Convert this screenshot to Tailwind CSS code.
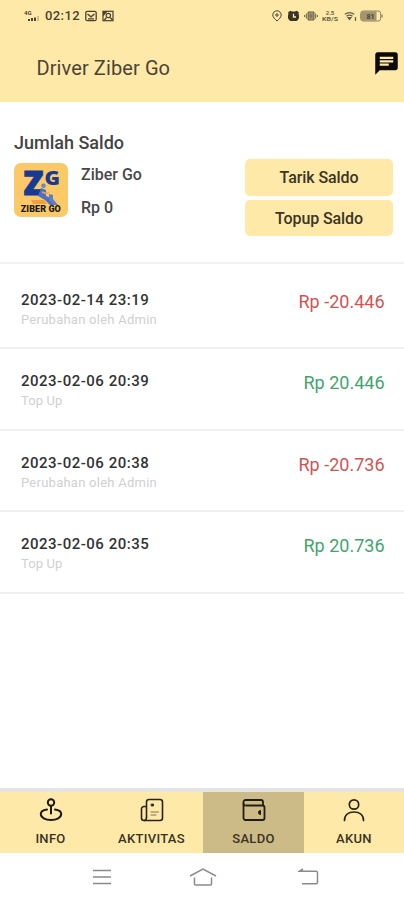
<!DOCTYPE html>
<html lang="id">
<head>
    <meta charset="UTF-8">
    <meta name="viewport" content="width=device-width, initial-scale=1.0">
    <title>Driver Ziber Go</title>
    <script src="https://cdn.jsdelivr.net/npm/@tailwindcss/browser@4"></script>
</head>
<body class="bg-white font-[Roboto,sans-serif] text-[#333]">
    <div class="flex flex-col w-[404px] h-[900px] overflow-hidden">
        <header class="h-[102px] shrink-0 bg-[#ffe9a9]">
            <!-- Status bar -->
            <div class="flex items-center h-8 pl-6 pr-[21px] text-[#4a4231]">
                <svg class="w-4 h-3 overflow-visible" viewBox="0 0 16 12" fill="currentColor">
                    <text x="0" y="5" font-size="6" font-weight="700">4G</text>
                    <path d="M4 9h2v2H4zM7 8h2v3H7zM10 7.500h2V11h-2z"/>
                    <path d="M13 6h2v5h-2z" opacity=".25"/>
                </svg>
                <span class="ml-[5px] text-[13px] font-medium tracking-[0.4px] leading-4">02:12</span>
                <svg class="ml-[5px] w-3 h-3" viewBox="0 0 12 12" fill="none" stroke="currentColor" stroke-width="1.3">
                    <rect x=".8" y="1.300" width="10.400" height="9.400" rx="1.500"/>
                    <path d="M2.500 4 6 6.800 9.500 4M3 8.800h6"/>
                </svg>
                <svg class="ml-[5px] w-3 h-3" viewBox="0 0 12 12" fill="none" stroke="currentColor" stroke-width="1.2">
                    <rect x="1" y="1.300" width="10" height="9.400"/>
                    <path d="M1.500 1.800h3L1.500 5z" fill="currentColor"/>
                    <circle cx="6.300" cy="5.500" r="2.200"/>
                    <path d="m2 10.500 2.500-3M10.500 10 8 7.500"/>
                </svg>
                <svg class="ml-auto w-[10px] h-3" viewBox="0 0 10 12" fill="none" stroke="currentColor">
                    <path d="M5 11C3 9 .8 7.500.8 5a4.200 4.200 0 0 1 8.400 0c0 2.500-2.200 4-4.200 6z"/>
                    <circle cx="5" cy="5" r="1.200"/>
                </svg>
                <svg class="ml-[6px] w-[11px] h-3" viewBox="0 0 11 12">
                    <path d="M.3 2 2.500.8l1.500.7h3L8.500.8 10.700 2v2.500A5 5 0 0 1 8.500 11h-6A5 5 0 0 1 .3 4.500z" fill="#3a3427"/>
                    <path d="M5.500 3.800V7H8" fill="none" stroke="#ffe9a9" stroke-width="1.300"/>
                </svg>
                <svg class="ml-[5px] w-[14px] h-3" viewBox="0 0 14 12" fill="none" stroke="#6b6148">
                    <path d="M4 2h6v8H4zM2.300 3.500v5M11.700 3.500v5M.6 5v2M13.400 5v2" fill="#a3966e"/>
                    <path d="M5.500 5h3M5.500 7h3"/>
                </svg>
                <svg class="ml-[3px] w-[18px] h-3 overflow-visible" viewBox="0 0 18 12" fill="#6b6148">
                    <text x="9" y="4.800" font-size="6" font-weight="700" text-anchor="middle">2.5</text>
                    <text x="1" y="11.200" font-size="5.500" font-weight="700" textLength="16" lengthAdjust="spacingAndGlyphs">KB/S</text>
                </svg>
                <svg class="ml-[5px] w-[13px] h-3" viewBox="0 0 13 12" fill="none" stroke="#6b6148" stroke-width="1.300">
                    <path d="M.8 4.300c2.800-2 6.600-2 9.400 0M2.500 6.200c1.800-1.300 4.200-1.300 6 0"/>
                    <path d="M2.800 7h5.400L5.500 10.500z" fill="#6b6148" stroke="none"/>
                    <path d="M11.500 7v4"/>
                </svg>
                <svg class="ml-[3px] w-[23px] h-3" viewBox="0 0 23 12">
                    <rect x=".7" y="1" width="20" height="10" rx="2.500" fill="#ffe9a9" stroke="#8d8261"/>
                    <path d="M3 1.300h13.500v9.400H3A2 2 0 0 1 1 9V3a2 2 0 0 1 2-1.700z" fill="#a3966e"/>
                    <text x="10.500" y="8.600" font-size="7" font-weight="700" text-anchor="middle" fill="#4a4231">81</text>
                    <path d="M22 4.500v3" stroke="#8d8261" stroke-width="1.300"/>
                </svg>
            </div>
            <!-- Title -->
            <div class="flex items-center justify-between h-[62px] pl-[36.500px] pr-[4px] pt-[10px]">
                <h1 class="text-[20px] leading-6 tracking-[0.1px] text-[#4b4436]">Driver Ziber Go</h1>
                <svg class="w-[27px] h-[27px] -mt-[9px]" viewBox="0 0 24 24" fill="#0c0a05">
                    <path d="M20 2H4c-1.100 0-1.990.9-1.990 2L2 22l4-4h14c1.100 0 2-.9 2-2V4c0-1.100-.9-2-2-2zM6 9h12v2H6V9zm8 5H6v-2h8v2zm4-6H6V6h12v2z"/>
                </svg>
            </div>
        </header>

        <!-- Balance -->
        <section class="h-[162px] shrink-0 border-b-2 border-[#f2f2f2] pl-[14px] pr-[11px] pt-[30px]">
            <h2 class="text-[18px] leading-[22px] font-medium text-[#444]">Jumlah Saldo</h2>
            <div class="flex mt-[5px]">
                <svg class="mt-[4px] w-[54px] h-[54px] shrink-0 overflow-visible" viewBox="0 0 54 54">
                    <rect width="54" height="54" rx="7" fill="#fbc967"/>
                    <g fill="#173a94" font-family="Open Sans, sans-serif" font-weight="800">
                        <text x="9.500" y="32" font-size="33" textLength="20" lengthAdjust="spacingAndGlyphs" stroke="#173a94">Z</text>
                        <text x="30.500" y="22" font-size="20" textLength="15.500" lengthAdjust="spacingAndGlyphs">G</text>
                    </g>
                    <path d="M17 37h13l3 4H19z" fill="#f0a040"/>
                    <path d="m27 25 5 2v6l5 2 5 7h-6l-5-5-7-4z" fill="#4c6fc4"/>
                    <path d="m35 31 4 1v4l5 6h-4l-5-5z" fill="#5f7fca"/>
                    <circle cx="29.500" cy="22.800" r="2.300" fill="#6d86c4"/>
                    <path d="m28 29 4 1.500 3-1" stroke="#f0a060" stroke-width="1.500" fill="none"/>
                    <text x="6.800" y="48.500" font-size="9" font-weight="900" textLength="40" lengthAdjust="spacing" fill="#1c160b">ZIBER GO</text>
                </svg>
                <div class="ml-[13px] pt-[6px] text-[16px] leading-5 font-medium text-[#484848]">
                    <p>Ziber Go</p>
                    <p class="mt-[13px]">Rp 0</p>
                </div>
                <div class="ml-auto flex flex-col gap-[4px] w-[148px] text-[16px] font-medium text-[#3b3525]">
                    <button class="h-[37px] rounded-[5px] bg-[#ffe9a9] tracking-[-0.1px]">Tarik Saldo</button>
                    <button class="h-[36px] rounded-[5px] bg-[#ffe9a9] tracking-[-0.1px] pt-px">Topup Saldo</button>
                </div>
            </div>
        </section>

        <!-- History -->
        <ul class="grow">
            <li class="flex justify-between h-[85px] border-b-2 border-[#efefef] pl-[21px] pr-[19.500px] pt-[25.500px]">
                <div>
                    <p class="text-[15px] leading-5 font-medium tracking-[0.5px] text-[#333]">2023-02-14 23:19</p>
                    <p class="text-[13px] leading-5 tracking-[0.25px] text-[#d0d0d0]">Perubahan oleh Admin</p>
                </div>
                <p class="text-[18px] leading-6 text-[#d45352]">Rp -20.446</p>
            </li>
            <li class="flex justify-between h-[82px] border-b-2 border-[#efefef] pl-[21px] pr-[19.500px] pt-[22px]">
                <div>
                    <p class="text-[15px] leading-5 font-medium tracking-[0.5px] text-[#333]">2023-02-06 20:39</p>
                    <p class="text-[13px] leading-5 tracking-[0.1px] text-[#d0d0d0]">Top Up</p>
                </div>
                <p class="text-[18px] leading-6 text-[#3fa56c]">Rp 20.446</p>
            </li>
            <li class="flex justify-between h-[81px] border-b-2 border-[#efefef] pl-[21px] pr-[19.500px] pt-[22px]">
                <div>
                    <p class="text-[15px] leading-5 font-medium tracking-[0.5px] text-[#333]">2023-02-06 20:38</p>
                    <p class="text-[13px] leading-5 tracking-[0.25px] text-[#d0d0d0]">Perubahan oleh Admin</p>
                </div>
                <p class="text-[18px] leading-6 text-[#d45352]">Rp -20.736</p>
            </li>
            <li class="flex justify-between h-[82px] border-b-2 border-[#efefef] pl-[21px] pr-[19.500px] pt-[22px]">
                <div>
                    <p class="text-[15px] leading-5 font-medium tracking-[0.5px] text-[#333]">2023-02-06 20:35</p>
                    <p class="text-[13px] leading-5 tracking-[0.1px] text-[#d0d0d0]">Top Up</p>
                </div>
                <p class="text-[18px] leading-6 text-[#3fa56c]">Rp 20.736</p>
            </li>
        </ul>

        <!-- Tabs -->
        <nav class="grid grid-cols-4 h-[65px] shrink-0 border-t-4 border-[#e2e4e5] bg-[#ffe9a9] text-[13px] font-medium tracking-[0.3px] text-[#3a3323]">
            <a class="flex flex-col items-center pt-[6px]">
                <svg class="w-6 h-6" viewBox="0 0 24 24" fill="none" stroke="#1d190f" stroke-width="2" stroke-linecap="round">
                    <circle cx="12" cy="4.500" r="3.200"/>
                    <path d="M12 8v7.500M8 11.500C4 12 1.800 13.800 1.800 16c0 3.500 4.500 6 10.200 6s10.200-2.500 10.200-6c0-2.200-2.200-4-6.200-4.500"/>
                </svg>
                <span class="mt-[9px] leading-4">INFO</span>
            </a>
            <a class="flex flex-col items-center pt-[6px]">
                <svg class="w-6 h-6" viewBox="0 0 24 24" fill="none" stroke="#2a2416" stroke-width="1.600" stroke-linecap="round" stroke-linejoin="round">
                    <path d="M6.500 19.500V4a2.500 2.500 0 0 1 2.500-2.500h11A2.500 2.500 0 0 1 22.500 4v16a2.500 2.500 0 0 1-2.500 2.500H4A2.500 2.500 0 0 1 1.500 20v-9A2.500 2.500 0 0 1 4 8.500h2.500"/>
                    <path d="M6.500 19.500c0 1.500-.8 2.500-2 3"/>
                    <path d="M11 14h7.500M11 17h5" stroke-width="1" opacity=".6"/>
                    <path d="M11.500 6h2v2h-2z" fill="#2a2416" stroke-width=".8"/>
                </svg>
                <span class="mt-[9px] leading-4">AKTIVITAS</span>
            </a>
            <a class="flex flex-col items-center pt-[6px] ml-px -mr-px bg-[#cdbb87]">
                <svg class="w-6 h-6" viewBox="0 0 24 24" fill="none" stroke="#211d12" stroke-width="1.800" stroke-linejoin="round">
                    <path d="M3.500 7.500h17a2 2 0 0 1 2 2V20a2 2 0 0 1-2 2h-17a2 2 0 0 1-2-2V4a2 2 0 0 1 2-2h15.500a2 2 0 0 1 2 2v3.500"/>
                    <path d="M1.500 5.500a2 2 0 0 0 2 2"/>
                    <path d="M18.500 12.500v4a2 2 0 0 1 0-4z" fill="#211d12" stroke-width="1"/>
                </svg>
                <span class="mt-[9px] leading-4">SALDO</span>
            </a>
            <a class="flex flex-col items-center pt-[6px] pl-px">
                <svg class="w-6 h-6" viewBox="0 0 24 24" fill="none" stroke="#2a2416" stroke-width="1.700" stroke-linecap="round">
                    <circle cx="12" cy="6.500" r="4.700"/>
                    <path d="M2.500 22.500c0-5.500 4-8.500 9.500-8.500s9.500 3 9.500 8.500"/>
                </svg>
                <span class="mt-[9px] leading-4">AKUN</span>
            </a>
        </nav>

        <!-- System buttons -->
        <div class="flex items-start h-[47px] shrink-0 pt-[14px] pl-[91px] text-[#8b8b8b]">
            <svg class="w-[22px] h-5" viewBox="0 0 22 20" fill="none" stroke="currentColor" stroke-width="1.500">
                <path d="M2 3.500h18M2 10h18M2 16.500h18"/>
            </svg>
            <svg class="ml-[75px] w-[30px] h-5" viewBox="0 0 30 20" fill="none" stroke="currentColor" stroke-width="1.500">
                <path d="M2 9 15 2l13 7M6.500 10.500V17a1 1 0 0 0 1 1h15a1 1 0 0 0 1-1v-6.500"/>
            </svg>
            <svg class="ml-[80px] w-[22px] h-5" viewBox="0 0 22 20" fill="none" stroke="currentColor" stroke-width="1.500">
                <path d="M5 2 1.500 4.200H18a1.500 1.500 0 0 1 1.500 1.500v9.600a1.500 1.500 0 0 1-1.500 1.500H4"/>
            </svg>
        </div>
    </div>
</body>
</html>
